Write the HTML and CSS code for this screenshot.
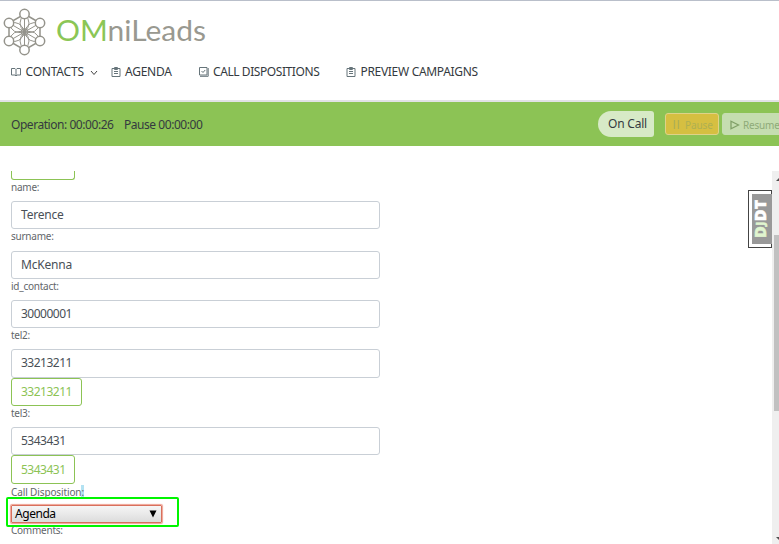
FILE: index.html
```html
<!DOCTYPE html>
<html lang="en">
<head>
<meta charset="utf-8">
<title>OMniLeads</title>
<link rel="stylesheet" href="styles.css">
</head>
<body>
<header class="header">
  <div class="brand">
    <svg class="emblem" width="44" height="48" viewBox="0 0 44 48" fill="none" stroke="#94938b" stroke-width="1.500">
      <path d="M21.500 6 37 15v18l-15.500 9L6 33V15Z"/>
      <path stroke-width="1" d="M21.500 6v36M6 15l31 18M37 15 6 33M21.500 6q-9 9 0 18q9-9 0-18M21.500 42q-9-9 0-18q9 9 0 18M6 15q3 12 15.500 9Q18 12 6 15M37 33q-3-12-15.500-9Q25 36 37 33M37 15q-12-3-15.500 9Q34 27 37 15M6 33q12 3 15.500-9Q9 21 6 33"/>
      <circle cx="21.500" cy="24" r="3.500" stroke-width="1"/>
      <g fill="#fff"><circle cx="21.500" cy="6" r="4.700"/><circle cx="37" cy="15" r="4.700"/><circle cx="37" cy="33" r="4.700"/><circle cx="21.500" cy="42" r="4.700"/><circle cx="6" cy="33" r="4.700"/><circle cx="6" cy="15" r="4.700"/></g>
    </svg>
    <svg class="wordmark" width="156" height="40"><text x="0" y="28" textLength="150" lengthAdjust="spacingAndGlyphs"><tspan class="om">OM</tspan>niLeads</text></svg>
  </div>
  <nav class="nav">
    <a class="nav-contacts"><svg width="10" height="10" viewBox="0 0 10 10"><path d="M.5 1.500H4L5 2.500 6 1.500h3.500v6.500H6L5 9 4 8H.5ZM5 2.500V9"/></svg><span>CONTACTS</span><svg class="chevron" width="8" height="6" viewBox="0 0 8 6"><path d="m1 1 3 3.500L7 1"/></svg></a>
    <a class="nav-agenda"><svg width="10" height="10" viewBox="0 0 10 10"><path d="M1 1.500h8v8H1ZM3.500.5h3v2h-3ZM3 4.500h4M3 6.500h4"/></svg><span>AGENDA</span></a>
    <a class="nav-calls"><svg width="10" height="10" viewBox="0 0 10 10"><path d="M.5.5h7.500v7.500H.5ZM9.200 1v8.300H1M2.500 4l1.500 1.500L6.200 3"/></svg><span>CALL DISPOSITIONS</span></a>
    <a class="nav-preview"><svg width="10" height="10" viewBox="0 0 10 10"><path d="M1 1.500h8v8H1ZM3.500.5h3v2h-3ZM3 4.500h4M3 6.500h4"/></svg><span>PREVIEW CAMPAIGNS</span></a>
  </nav>
</header>
<section class="statusbar">
  <span class="operation">Operation: 00:00:26</span>
  <span class="pause-time">Pause 00:00:00</span>
  <span class="state">On Call</span>
  <button class="control pause"><svg width="8" height="9" viewBox="0 0 8 9"><path d="M1.500 0v9M5.500 0v9"/></svg>Pause</button>
  <button class="control resume"><svg width="10" height="10" viewBox="0 0 10 10"><path d="M1 1.200v7.600L8.500 5Z"/></svg>Resume</button>
</section>
<main class="content">
  <form class="form">
    <div class="call clipped"></div>
    <label>name:</label>
    <div class="field">Terence</div>
    <label>surname:</label>
    <div class="field">McKenna</div>
    <label>id_contact:</label>
    <div class="field digits">30000001</div>
    <label>tel2:</label>
    <div class="field digits">33213211</div>
    <div class="call digits">33213211</div>
    <label>tel3:</label>
    <div class="field digits">5343431</div>
    <div class="call digits short">5343431</div>
    <label class="l-disp">Call Disposition<span class="mark">:</span></label>
    <div class="select"><span>Agenda</span><svg width="8" height="8" viewBox="0 0 8 8"><path d="M.5.5h7L4 7.500Z"/></svg><div class="outline"></div></div>
    <label>Comments:</label>
  </form>
  <div class="scrollbar">
    <svg class="arrow" width="7" height="10" viewBox="0 0 7 10"><path d="M4 10h3V7Z"/></svg>
    <div class="thumb"></div>
    <svg class="arrow" width="7" height="8" viewBox="0 0 7 8"><path d="M4 1h3v3Z"/></svg>
  </div>
</main>
<aside class="debug"><div><span class="dj">D<small>J</small></span>DT</div></aside>
</body>
</html>
```
FILE: styles.css
```css
* { box-sizing: border-box; }
body {
  margin: 0;
  height: 544px;
  overflow: hidden;
  position: relative;
  display: flex;
  flex-direction: column;
  background: #fff;
  color: #343a40;
  font: 12px/18px "Noto Sans", "Open Sans", sans-serif;
}
svg { display: block; flex: none; }
.header {
  height: 102px;
  flex: none;
  border-top: 1px solid #b9bfca;
  border-bottom: 2px solid #e2e2e6;
}
.brand { display: flex; height: 56px; padding: 7px 0 0 3px; }
.wordmark { margin: 5px 0 0 9px; }
.wordmark text { font: 29px Lato, sans-serif; fill: #999990; }
.wordmark .om { fill: #8bc656; }
.nav { display: flex; padding: 6px 0 0 11px; }
.nav a { display: flex; align-items: center; height: 18px; white-space: nowrap; }
.nav svg { margin-right: 4px; fill: none; stroke: #66747a; stroke-width: 1; }
.nav .chevron { margin: 2px 0 0 6px; stroke: #444; }
.nav-contacts { width: 100px; letter-spacing: -0.2px; }
.nav-agenda { width: 88px; letter-spacing: -0.25px; }
.nav-calls { width: 147px; letter-spacing: -0.42px; }
.nav-preview { letter-spacing: -0.31px; }
.nav-preview svg, .nav-contacts svg:first-child { margin-right: 4.5px; }
.statusbar {
  height: 44px;
  flex: none;
  display: flex;
  align-items: center;
  padding-left: 11px;
  background: #8cc355;
  overflow: hidden;
  white-space: nowrap;
}
.operation { width: 113px; padding-top: 1px; letter-spacing: -0.45px; }
.pause-time { width: 474px; padding-top: 1px; letter-spacing: -0.45px; }
.statusbar > * { flex: none; }
.state {
  width: 56px;
  height: 26px;
  padding: 4px 0 0 10px;
  background: #d7eac6;
  border-radius: 13px 3px 3px 13px;
  letter-spacing: -0.2px;
}
.control {
  height: 22px;
  display: flex;
  align-items: center;
  gap: 4px;
  padding: 1px 0 0 7px;
  border: 1px solid #c5ddb0;
  border-radius: 3px;
  background: #c5ddb0;
  color: #8eaa78;
  font: 10px "Noto Sans", sans-serif;
}
.control svg { fill: none; stroke: #80a068; stroke-width: 1.3; }
.pause { width: 54px; margin: 0 3px 0 11px; background: #d6bf41; border-color: #dfd288; color: #aeb052; letter-spacing: -0.1px; }
.pause svg { stroke: #aeb052; }
.resume { width: 75px; gap: 3px; letter-spacing: -0.2px; }
.content { flex: 1; display: flex; margin-top: 25px; overflow: hidden; }
.form { flex: 1; padding-left: 11px; }
.form label {
  display: block;
  height: 21.2px;
  font-size: 10px;
  line-height: 14px;
  letter-spacing: -0.25px;
  color: #62666a;
}
.field, .call {
  width: 369px;
  height: 28.200px;
  padding: 0 9px;
  border: 1px solid #c9cfd6;
  border-radius: 3px;
  line-height: 26px;
  color: #495057;
  letter-spacing: -0.2px;
}
.call { width: 71px; border-color: #8cc355; color: #8cc355; }
.short { width: 64px; height: 29px; line-height: 27px; }
.clipped { width: 64px; height: 9px; border-top: 0; border-radius: 0 0 3px 3px; }
.form .digits { letter-spacing: -0.5px; }
.form .l-disp { padding-top: 1px; letter-spacing: -0.12px; }
.mark { background: #b3e2f2; }
.select {
  position: relative;
  display: flex;
  justify-content: space-between;
  align-items: center;
  width: 151px;
  height: 18px;
  padding: 0 4px 0 3px;
  border: 1px solid #d8705c;
  border-radius: 1px;
  box-shadow: 0 0 1px 1px #efa193;
  background: linear-gradient(#f6f6f6, #dcdcdc);
  color: #000;
  letter-spacing: -0.45px;
}
.outline {
  position: absolute;
  inset: -9px -18px -5px -6px;
  border: 2px solid #00f500;
  border-radius: 2px;
}
.scrollbar { width: 7px; display: flex; flex-direction: column; justify-content: space-between; background: #efefef; }
.scrollbar .thumb { height: 176px; margin: 0 0 71px 2px; background: #c1c1c1; }
.arrow path { fill: #505050; }
.debug {
  position: absolute;
  left: 748px;
  top: 190px;
  width: 24px;
  height: 58px;
  padding: 3px 0 3px 3px;
  border: 1px solid #444;
  background: #fff;
}
.debug div {
  height: 50px;
  width: 20px;
  background: #999;
  writing-mode: vertical-rl;
  transform: rotate(180deg);
  text-align: center;
  font: 900 16px/15px "Noto Sans", sans-serif;
  letter-spacing: 0.6px;
  -webkit-text-stroke: 0.5px;
  color: #fff;
}
.debug .dj { color: #e0f5cf; }
.debug small { font-size: 11px; }
```
